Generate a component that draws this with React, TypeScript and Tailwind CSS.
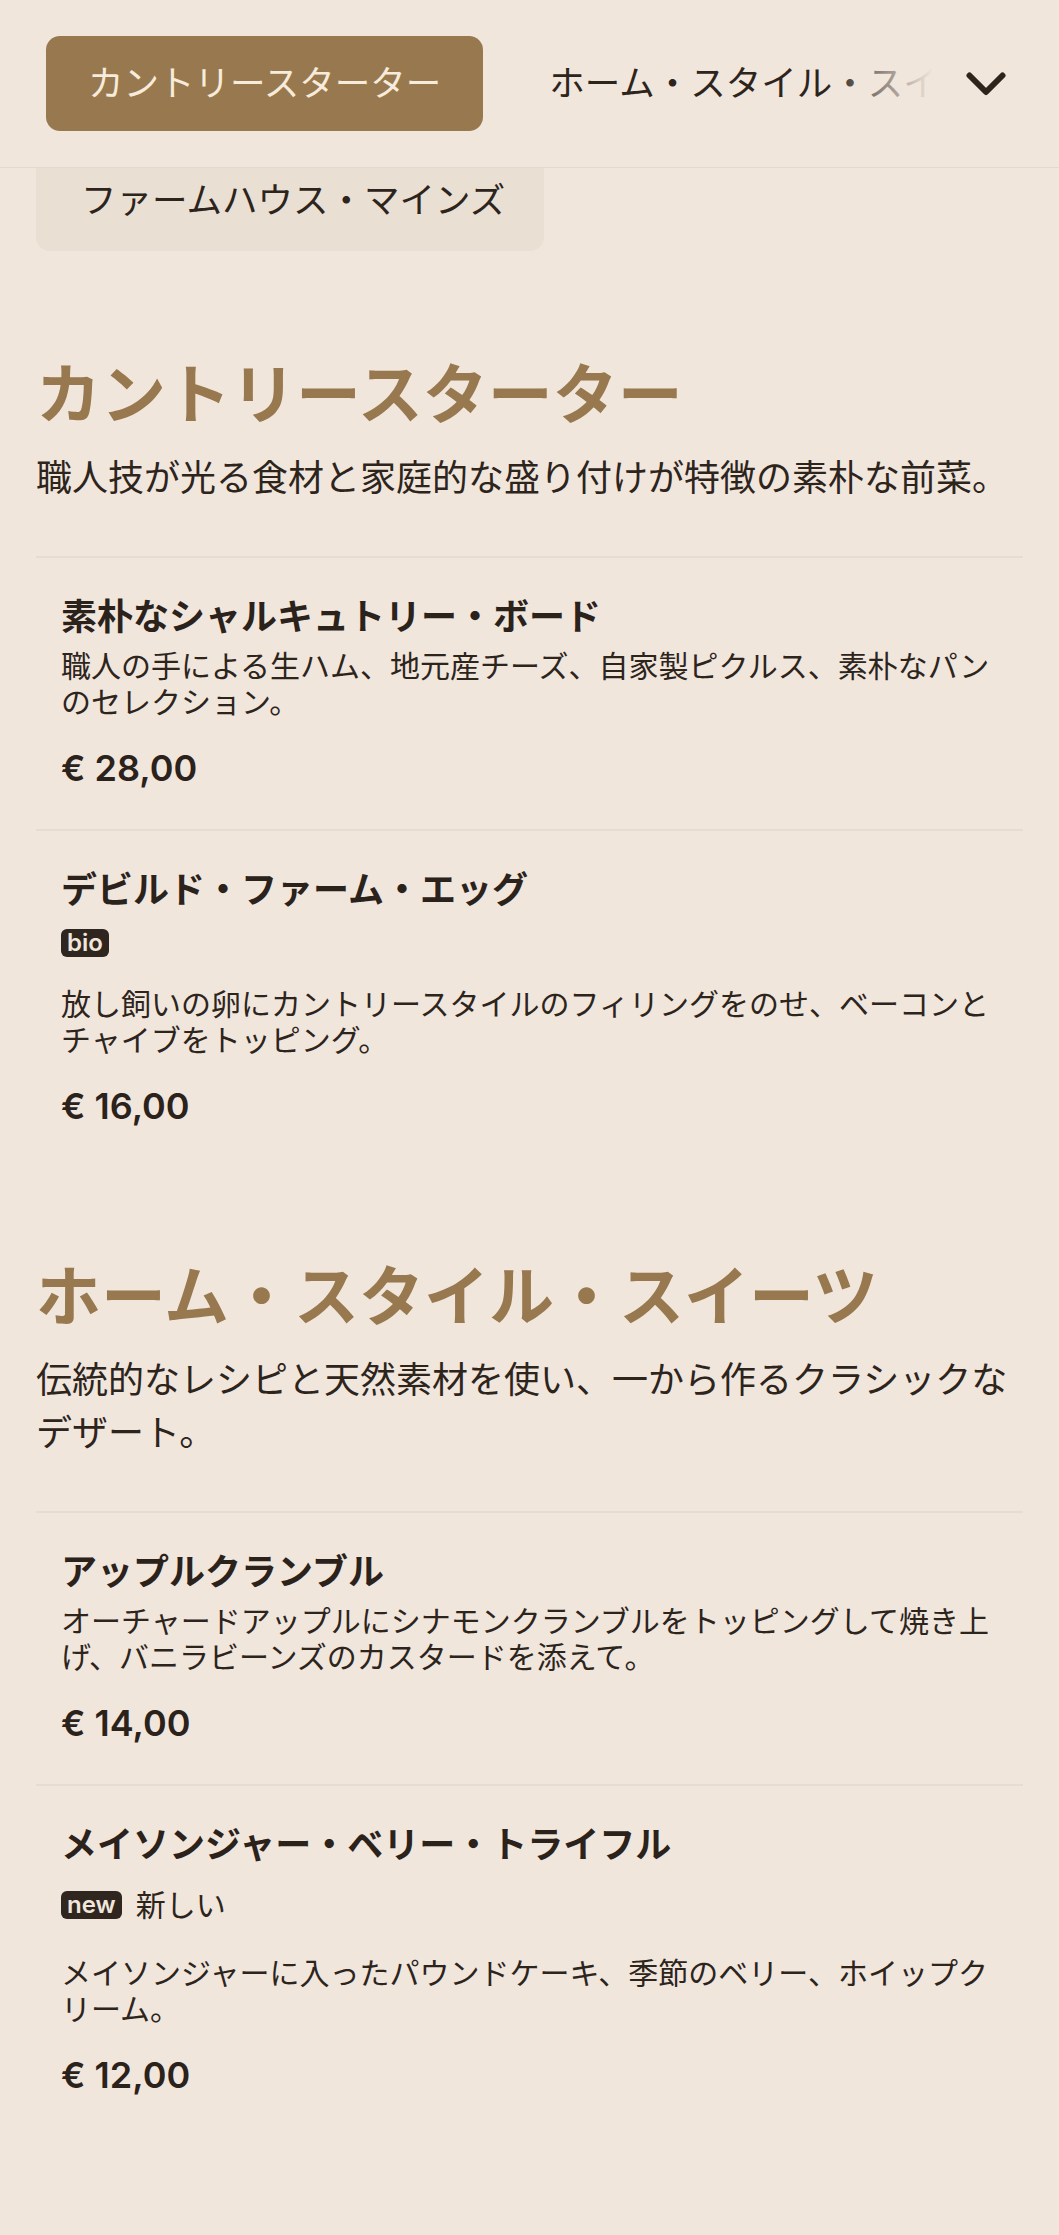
import React from "react";

type Item = {
  title: string;
  tags?: { badge: string; label?: string }[];
  desc: string;
  price: string;
};

type Section = {
  title: string;
  desc: string;
  items: Item[];
};

const sections: Section[] = [
  {
    title: "カントリースターター",
    desc: "職人技が光る食材と家庭的な盛り付けが特徴の素朴な前菜。",
    items: [
      {
        title: "素朴なシャルキュトリー・ボード",
        desc: "職人の手による生ハム、地元産チーズ、自家製ピクルス、素朴なパンのセレクション。",
        price: "€ 28,00",
      },
      {
        title: "デビルド・ファーム・エッグ",
        tags: [{ badge: "bio" }],
        desc: "放し飼いの卵にカントリースタイルのフィリングをのせ、ベーコンとチャイブをトッピング。",
        price: "€ 16,00",
      },
    ],
  },
  {
    title: "ホーム・スタイル・スイーツ",
    desc: "伝統的なレシピと天然素材を使い、一から作るクラシックなデザート。",
    items: [
      {
        title: "アップルクランブル",
        desc: "オーチャードアップルにシナモンクランブルをトッピングして焼き上げ、バニラビーンズのカスタードを添えて。",
        price: "€ 14,00",
      },
      {
        title: "メイソンジャー・ベリー・トライフル",
        tags: [{ badge: "new", label: "新しい" }],
        desc: "メイソンジャーに入ったパウンドケーキ、季節のベリー、ホイップクリーム。",
        price: "€ 12,00",
      },
    ],
  },
];

function MenuItem({ item }: { item: Item }) {
  return (
    <li className="border-t-[2px] border-[#e7dccf] px-[25px] pt-[34px] pb-[37px]">
      <h3 className="text-[36px] leading-[50px] font-bold text-[#2b221b]">{item.title}</h3>
      {item.tags && (
        <div className="mt-[14px] flex items-center gap-[14px]">
          {item.tags.map((t) => (
            <React.Fragment key={t.badge}>
              <span className="inline-flex h-[28px] items-center rounded-[6px] bg-[#2f261f] px-[6px] font-['Inter',sans-serif] text-[24px] leading-none font-semibold text-[#f0e6dc]">
                {t.badge}
              </span>
              {t.label && <span className="text-[30px] leading-[42px]">{t.label}</span>}
            </React.Fragment>
          ))}
        </div>
      )}
      <p className={`${item.tags ? "mt-[29px]" : "mt-[6px]"} text-[30px] leading-[36px]`}>{item.desc}</p>
      <p className="mt-[24px] font-['Inter',sans-serif] text-[36px] leading-[48px] font-semibold text-[#2b221b]">
        {item.price}
      </p>
    </li>
  );
}

export default function App() {
  return (
    <div className="min-h-[2235px] bg-[#f0e6dc] font-['Inter','Noto_Sans_CJK_JP',sans-serif] text-[#2d241c]">
      <header className="relative z-10 flex items-center border-b border-[#e4d9cc] bg-[#f0e6dc] pt-[36px] pr-[20px] pb-[36px] pl-[46px]">
        <div className="relative min-w-0 flex-1 overflow-hidden">
          <div className="flex gap-[24px] whitespace-nowrap">
            <button className="flex h-[95px] shrink-0 items-center rounded-[14px] bg-[#98794f] px-[42px] text-[35.5px] text-[#f7ebdb]">
              カントリースターター
            </button>
            <button className="flex h-[95px] shrink-0 items-center rounded-[14px] px-[42px] text-[35.5px] text-[#2d241c]">
              ホーム・スタイル・スイーツ
            </button>
            <button className="flex h-[95px] shrink-0 items-center rounded-[14px] px-[42px] text-[35.5px] text-[#2d241c]">
              ファームハウス・マインズ
            </button>
          </div>
          <div className="pointer-events-none absolute inset-y-0 right-0 w-[105px] bg-linear-to-r from-[#f0e6dc00] to-[#f0e6dc]" />
        </div>
        <button className="flex w-[106px] shrink-0 items-center justify-center" aria-label="more">
          <svg width="40" height="24" viewBox="0 0 40 24" fill="none">
            <polyline
              points="3.5,3.5 20,20 36.5,3.5"
              stroke="#2d241c"
              strokeWidth="6"
              strokeLinecap="round"
              strokeLinejoin="round"
            />
          </svg>
        </button>
      </header>

      <div className="ml-[36px] h-[83px] w-[508px] rounded-b-[14px] bg-[#e9dfd3] pt-[7px] pl-[45px] text-[35.5px] leading-[52px]">
        ファームハウス・マインズ
      </div>

      <main className="px-[36px] pb-[97px]">
        {sections.map((s, i) => (
          <section key={s.title} className={i === 0 ? "mt-[104px]" : "mt-[90px]"}>
            <h2 className="text-[65px] leading-[80px] font-bold text-[#98784e]">{s.title}</h2>
            <p className="mt-[17px] text-[36px] leading-[53px]">{s.desc}</p>
            <ul className="mt-[51px]">
              {s.items.map((it) => (
                <MenuItem key={it.title} item={it} />
              ))}
            </ul>
          </section>
        ))}
      </main>
    </div>
  );
}
